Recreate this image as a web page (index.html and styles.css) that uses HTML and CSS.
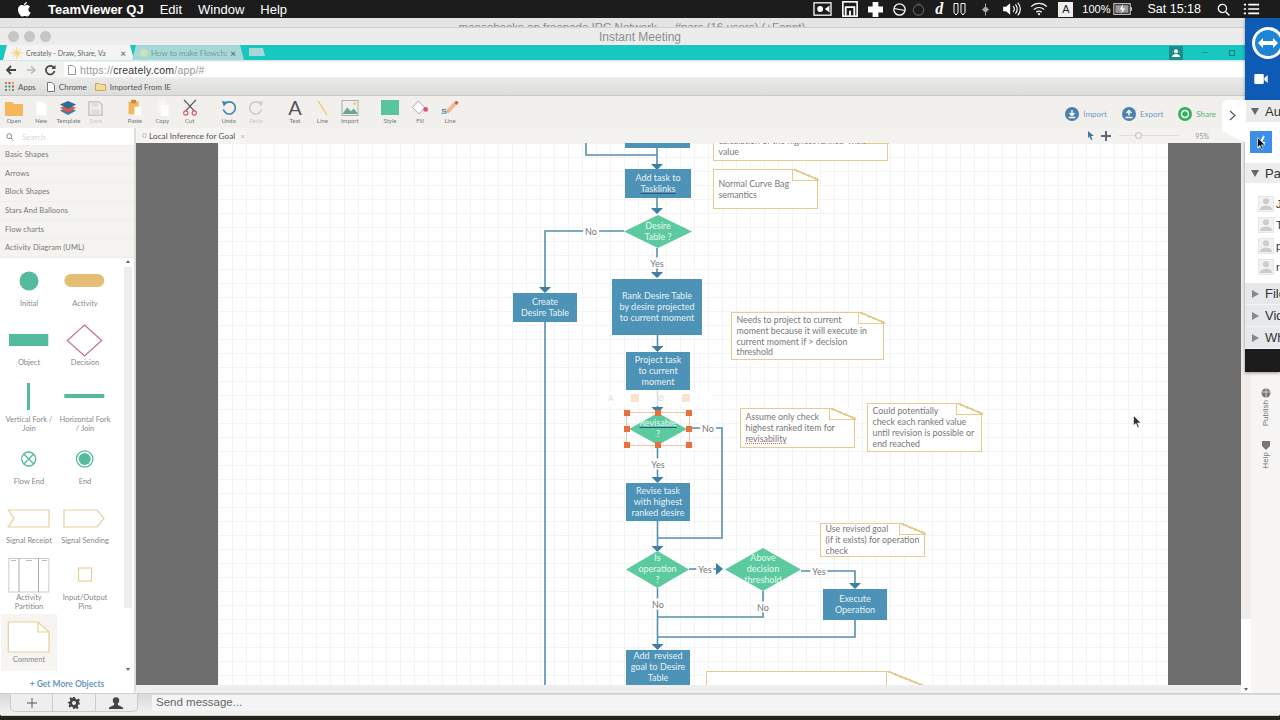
FILE: index.html
```html
<!DOCTYPE html>
<html lang="en">
<head>
  <meta charset="UTF-8" />
  <title>Instant Meeting</title>
  <link rel="stylesheet" href="styles.css">
</head>
<body>
  <div class="menubar">
    <svg class="apple" width="14" height="16" viewBox="0 0 14 16"><path fill="#fff" d="M10 1c0 1.500-1.300 3-3 3 0-1.600 1.400-3 3-3zM7 4.600c1 0 1.700-.6 3-.6 1 0 2.200.5 3 1.700-2.400 1.500-2 4.800.7 5.900-.6 1.600-1.900 3.900-3.300 3.900-1 0-1.400-.6-2.500-.6s-1.600.6-2.500.6C3.700 15.500 1 11.900 1 8.700 1 5.700 3 4.100 4.800 4.100c1 0 1.700.5 2.200.5z"/></svg>
    <b class="menu-app">TeamViewer QJ</b>
    <span class="menu-item">Edit</span>
    <span class="menu-item">Window</span>
    <span class="menu-item">Help</span>
    <div class="status">
      <svg width="19" height="14" viewBox="0 0 16 12"><rect x=".7" y=".7" width="14.600" height="10.600" fill="none" stroke="#fff" stroke-width="1.100"/><circle cx="6" cy="6" r="2.500" fill="#fff"/><path d="M10 6l4-3v6z" fill="#fff"/></svg>
      <svg width="16" height="16" viewBox="0 0 13 13"><rect x=".7" y=".7" width="11.600" height="11.600" fill="none" stroke="#fff" stroke-width="1.300"/><path d="M3 12V5h7v7M6.500 12V8" fill="none" stroke="#fff" stroke-width="1.500"/></svg>
      <svg width="15" height="15" viewBox="0 0 13 13"><path fill="#fff" d="M4 0h5v4h4v5H9v4H4V9H0V4h4z"/></svg>
      <svg width="13" height="13" viewBox="0 0 12 12"><circle cx="6" cy="6" r="5.200" fill="none" stroke="#fff" stroke-width="1.200"/><path d="M1 5l5 1 5 1" stroke="#fff" fill="none"/></svg>
      <svg class="status-timer" width="13" height="13" viewBox="0 0 12 12"><circle cx="6" cy="6.500" r="4.800" fill="none" stroke="#555" stroke-width="1.200"/><path d="M4 1h4" stroke="#555"/></svg>
      <i class="status-d">d</i>
      <svg width="13" height="14" viewBox="0 0 13 13"><path d="M1 1h4v9l-2 2.500L1 10zM8 1h4v9l-2 2.500L8 10z" fill="none" stroke="#fff"/></svg>
      <svg class="status-bt" width="9" height="13" viewBox="0 0 9 12"><path d="M4.500 0v12M1 6h7" stroke="#aaa"/><circle cx="4.500" cy="6" r="2.500" fill="#aaa"/></svg>
      <svg class="status-vol" width="19" height="14" viewBox="0 0 16 12"><path fill="#fff" d="M0 4h2.500L6 1v10L2.500 8H0z"/><path d="M8.500 3.500a3.500 3.500 0 010 5M10.500 2a6 6 0 010 8M12.500.5a8 8 0 010 11" stroke="#fff" fill="none"/></svg>
      <svg width="18" height="14" viewBox="0 0 15 12"><path d="M.8 4a9.500 9.500 0 0113.400 0M3 6.500a6.500 6.500 0 019 0M5.200 8.800a3.200 3.200 0 014.600 0" stroke="#fff" fill="none" stroke-width="1"/><path d="M6.300 10.200L7.500 11.600l1.200-1.400a1.500 1.500 0 00-2.400 0z" fill="#fff"/></svg>
      <span class="status-a">A</span>
      <span class="status-text">100%</span>
      <svg class="status-batt" width="22" height="12" viewBox="0 0 18 11"><rect x=".6" y=".6" width="15" height="9.800" fill="none" stroke="#ccc"/><rect x="2" y="2" width="12" height="7" fill="#999"/><path d="M16.500 4v3" stroke="#ccc" stroke-width="1.500"/><path d="M9 1L6 6h2.500L7 10l4-5H8.500z" fill="#fff"/></svg>
      <span class="status-text clock">Sat 15:18</span>
      <svg width="13" height="13" viewBox="0 0 12 12"><circle cx="5" cy="5" r="3.800" fill="none" stroke="#fff" stroke-width="1.200"/><path d="M8 8l3.500 3.500" stroke="#fff" stroke-width="1.300"/></svg>
      <svg class="status-list" width="17" height="12" viewBox="0 0 14 11"><path d="M0 1.500h2M4 1.500h10M0 5.500h2M4 5.500h10M0 9.500h2M4 9.500h10" stroke="#fff" stroke-width="1.500"/></svg>
    </div>
  </div>

  <div class="desktop">
    <div class="meeting-window">
      <div class="back-title">moosebooks on freenode IRC Network — #pars (16 users) (+Fopnt)</div>
      <div class="meeting-title">
        <div class="lights"><span class="light"></span><span class="light"></span><span class="light"></span></div>
        <span class="meeting-name">Instant Meeting</span>
      </div>

      <div class="tabstrip">
        <div class="tab tab-active">
          <svg width="12" height="12" viewBox="0 0 12 12"><circle cx="6" cy="6" r="2.500" fill="#f3d77f"/><path d="M6 0v12M0 6h12M2 2l8 8M10 2l-8 8" stroke="#f3d77f"/></svg>
          <span class="tab-title">Creately - Draw, Share, Va</span><span class="tab-x">×</span>
        </div>
        <div class="tab tab-back">
          <span class="tab-fav"></span>
          <span class="tab-title">How to make Flowcha</span><span class="tab-x">×</span>
        </div>
        <div class="tab-new"></div>
        <div class="tabstrip-right">
          <span class="profile-btn"><svg width="8" height="8" viewBox="0 0 8 8"><circle cx="4" cy="2.200" r="2" fill="#fff"/><path d="M0 8c0-2 2-3 4-3s4 1 4 3z" fill="#fff"/></svg></span>
          <span class="win-min"></span>
          <span class="win-max"></span>
        </div>
      </div>

      <div class="urlbar">
        <svg width="50" height="12" viewBox="0 0 50 12"><path d="M1 6h9M5 2L1 6l4 4" stroke="#444" stroke-width="1.800" fill="none"/><path d="M21 6h8M25 2.500L29 6l-4 3.500" stroke="#bbb" stroke-width="1.600" fill="none"/><path d="M48 4a4.300 4.300 0 10.500 3" stroke="#444" stroke-width="1.700" fill="none"/><path d="M49.500 1v4h-4z" fill="#444"/></svg>
        <div class="urlfield">
          <svg width="8" height="10" viewBox="0 0 8 10"><path d="M.5.500h4.500l2.500 2.500v6.500h-7z" fill="none" stroke="#999"/></svg>
          <span class="url-dim">https://</span><span class="url-host">creately.com</span><span class="url-dim">/app/#</span>
        </div>
      </div>

      <div class="bookmarks">
        <svg width="9" height="9" viewBox="0 0 9 9"><g fill="#c74"><rect width="2" height="2"/><rect x="3.500" width="2" height="2" fill="#d44"/><rect x="7" width="2" height="2" fill="#da3"/><rect y="3.500" width="2" height="2" fill="#4a6"/><rect x="3.500" y="3.500" width="2" height="2" fill="#48c"/><rect x="7" y="3.500" width="2" height="2" fill="#d44"/><rect y="7" width="2" height="2" fill="#48c"/><rect x="3.500" y="7" width="2" height="2" fill="#da3"/><rect x="7" y="7" width="2" height="2" fill="#4a6"/></g></svg>
        <span class="bm-label">Apps</span>
        <svg class="bm-icon" width="8" height="10" viewBox="0 0 8 10"><path d="M.5.500h4.500l2.500 2.500v6.500h-7z" fill="#fff" stroke="#777"/></svg>
        <span class="bm-label">Chrome</span>
        <svg class="bm-icon bm-folder" width="11" height="9" viewBox="0 0 11 9"><path d="M.5 1.500h4l1 1h5v6h-10z" fill="#f4dc9c" stroke="#c9a95a"/></svg>
        <span class="bm-label">Imported From IE</span>
      </div>

      <div class="toolbar">
        <div class="tool-group">
          <div class="tool"><svg width="20" height="14" viewBox="0 0 20 14"><path d="M1 0h7l2 2h9v12H1z" fill="#f4b75d"/></svg><span>Open</span></div>
          <div class="tool"><svg width="13" height="15" viewBox="0 0 14 18"><path d="M1 1h8l4 4v12H1z" fill="#fff"/></svg><span>New</span></div>
          <div class="tool"><svg width="18" height="16" viewBox="0 0 20 18"><path d="M10 8l9 4-9 5-9-5z" fill="#3d7fa5"/><path d="M10 5l9 4-9 5-9-5z" fill="#e5574a"/><path d="M10 1l9 4-9 5-9-5z" fill="#2c6f96"/></svg><span>Template</span></div>
          <div class="tool tool-off"><svg width="15" height="15" viewBox="0 0 16 16"><path d="M1 1h11l3 3v11H1z" fill="none" stroke="#bbb" stroke-width="1.300"/><rect x="4" y="1" width="7" height="5" fill="#ddd"/><rect x="3.500" y="9" width="9" height="6" fill="#ddd"/></svg><span>Save</span></div>
        </div>
        <div class="tool-group">
          <div class="tool"><svg width="15" height="18" viewBox="0 0 16 20"><rect x="1" y="3" width="12" height="15" fill="#f4b75d"/><rect x="4" y="1" width="6" height="4" fill="#c98a3a"/><rect x="8" y="9" width="8" height="10" fill="#fff"/></svg><span>Paste</span></div>
          <div class="tool"><svg width="13" height="18" viewBox="0 0 14 20"><rect x="1" y="1" width="9" height="13" fill="#f7f6f3"/><rect x="5" y="7" width="9" height="13" fill="#fff"/></svg><span>Copy</span></div>
          <div class="tool"><svg width="16" height="18" viewBox="0 0 18 20"><path d="M2 1l12 13M16 1L4 14" stroke="#555" stroke-width="1.500"/><circle cx="4" cy="16.500" r="2.500" fill="none" stroke="#e0506a" stroke-width="1.300"/><circle cx="14" cy="16.500" r="2.500" fill="none" stroke="#e0506a" stroke-width="1.300"/></svg><span>Cut</span></div>
        </div>
        <div class="tool-group">
          <div class="tool"><svg width="15" height="16" viewBox="0 0 16 17"><path d="M4 4a6.500 6.500 0 11-1.500 6" fill="none" stroke="#3f87ad" stroke-width="1.800"/><path d="M1 1l6 1-4 5z" fill="#3f87ad"/></svg><span>Undo</span></div>
          <div class="tool tool-off"><svg width="15" height="16" viewBox="0 0 16 17"><path d="M12 4a6.500 6.500 0 101.500 6" fill="none" stroke="#ccc" stroke-width="1.800"/><path d="M15 1l-6 1 4 5z" fill="#ccc"/></svg><span>Redo</span></div>
        </div>
        <div class="tool-group">
          <div class="tool"><span class="tool-a">A</span><span>Text</span></div>
          <div class="tool"><svg width="13" height="16" viewBox="0 0 14 18"><path d="M2 1l10 16" stroke="#f0c878" stroke-width="1.500"/></svg><span>Line</span></div>
          <div class="tool"><svg width="18" height="16" viewBox="0 0 18 17"><rect x=".5" y=".5" width="17" height="16" fill="#eee" stroke="#aaa"/><path d="M1 15l5-7 4 4 3-3 4 5v1H1z" fill="#68a890"/><circle cx="14" cy="4" r="1.500" fill="#f0d060"/></svg><span>Import</span></div>
        </div>
        <div class="tool-group tool-group-wide">
          <div class="tool"><span class="tool-swatch"></span><span>Style</span></div>
          <div class="tool"><svg width="18" height="16" viewBox="0 0 18 17"><path d="M7 1l7 7-6 7-7-7z" fill="#fff" stroke="#aaa"/><circle cx="15" cy="10" r="2.500" fill="#e0506a"/></svg><span>Fill</span></div>
          <div class="tool"><svg width="20" height="17" viewBox="0 0 20 18"><path d="M7 14L17 3" stroke="#f4b78f" stroke-width="4"/><path d="M16 3l2 2" stroke="#e0506a" stroke-width="3.500"/><path d="M6 11H2v2h4v2H1" stroke="#3f87ad" fill="none"/></svg><span>Line</span></div>
        </div>
        <div class="share-group">
          <span class="share-btn share-blue"><svg width="14" height="14" viewBox="0 0 14 14"><circle cx="7" cy="7" r="7" fill="#4a80b0"/><path d="M7 3v5M4.500 6L7 8.500 9.500 6M3.500 10.500h7" stroke="#fff" fill="none" stroke-width="1.400"/></svg>Import</span>
          <span class="share-btn share-blue"><svg width="14" height="14" viewBox="0 0 14 14"><circle cx="7" cy="7" r="7" fill="#4a80b0"/><path d="M7 8.500v-5M4.500 6L7 3.500 9.500 6M3.500 10.500h7" stroke="#fff" fill="none" stroke-width="1.400"/></svg>Export</span>
          <span class="share-btn share-green"><svg width="14" height="14" viewBox="0 0 14 14"><circle cx="7" cy="7" r="7" fill="#33b05a"/><circle cx="7" cy="7" r="3.500" fill="none" stroke="#fff" stroke-width="1.500"/></svg>Share</span>
        </div>
      </div>

      <div class="workarea">
        <aside class="sidebar">
          <div class="search"><svg width="8" height="8" viewBox="0 0 8 8"><circle cx="3.200" cy="3.200" r="2.400" fill="none" stroke="#888"/><path d="M5 5l2.500 2.500" stroke="#888"/></svg><span>Search</span></div>
          <div class="cat">Basic Shapes</div>
          <div class="cat">Arrows</div>
          <div class="cat">Block Shapes</div>
          <div class="cat">Stars And Balloons</div>
          <div class="cat">Flow charts</div>
          <div class="cat">Activity Diagram (UML)</div>
          <div class="shapes-wrap">
            <div class="shapes">
              <div class="shape"><svg width="56" height="40" viewBox="0 0 56 40"><circle cx="28" cy="22" r="9.500" fill="#55bb9f"/></svg><span>Initial</span></div>
              <div class="shape"><svg width="56" height="40" viewBox="0 0 56 40"><rect x="7.300" y="15" width="40" height="13" rx="6.500" fill="#e6bd74"/></svg><span>Activity</span></div>
              <div class="shape"><svg width="56" height="40" viewBox="0 0 56 40"><rect x="8" y="16" width="39.300" height="12" fill="#55bb9f"/></svg><span>Object</span></div>
              <div class="shape"><svg width="56" height="40" viewBox="0 0 56 40"><path d="M27.500 7l17.200 15.500L27.500 38 10.300 22.500z" fill="#fff" stroke="#cf6f84" stroke-width="1.200"/></svg><span>Decision</span></div>
              <div class="shape"><svg width="56" height="38" viewBox="0 0 56 38"><rect x="26" y="6" width="3" height="27" fill="#55bb9f"/></svg><span>Vertical Fork / Join</span></div>
              <div class="shape"><svg width="56" height="38" viewBox="0 0 56 38"><rect x="7.300" y="17" width="40" height="4" fill="#55bb9f"/></svg><span>Horizontal Fork / Join</span></div>
              <div class="shape"><svg width="56" height="41" viewBox="0 0 56 41"><circle cx="27.700" cy="23" r="7" fill="#fff" stroke="#55bb9f" stroke-width="1.300"/><path d="M22.800 18l10 10M32.800 18l-10 10" stroke="#55bb9f" stroke-width="1.300"/></svg><span>Flow End</span></div>
              <div class="shape"><svg width="56" height="41" viewBox="0 0 56 41"><circle cx="27.700" cy="23" r="8.200" fill="#fff" stroke="#55bb9f" stroke-width="1.300"/><circle cx="27.700" cy="23" r="6" fill="#55bb9f"/></svg><span>End</span></div>
              <div class="shape"><svg width="56" height="41" viewBox="0 0 56 41"><path d="M7.300 15H48v17H7.300l5.700-8.500z" fill="#fff" stroke="#e7cf9b" stroke-width="1.200"/></svg><span>Signal Receipt</span></div>
              <div class="shape"><svg width="56" height="41" viewBox="0 0 56 41"><path d="M7 15h33l7 8.500-7 8.500H7z" fill="#fff" stroke="#e7cf9b" stroke-width="1.200"/></svg><span>Signal Sending</span></div>
              <div class="shape"><svg width="56" height="39" viewBox="0 0 56 39"><rect x="7.800" y="4.500" width="40" height="33.500" fill="#fff" stroke="#ccc"/><path d="M18 4.500V38M37.500 4.500V38" stroke="#aaa" fill="none"/><path d="M10 6.500h5M25 6.500h6M41 6.500h5" stroke="#bbb"/></svg><span>Activity<br>Partition</span></div>
              <div class="shape"><svg width="56" height="39" viewBox="0 0 56 39"><rect x="21.500" y="14" width="13" height="13" fill="#fff" stroke="#e7cf9b" stroke-width="1.200"/></svg><span>Input/Output Pins</span></div>
              <div class="shape shape-sel"><svg width="56" height="41" viewBox="0 0 56 41"><path d="M7.300 8H37l11 10v20H7.300z" fill="#fff" stroke="#e7cf9b" stroke-width="1.200"/><path d="M37 8v10h11" fill="none" stroke="#e7cf9b" stroke-width="1.200"/></svg><span>Comment</span></div>
            </div>
            <div class="scroll-track"><span class="scroll-up"></span><span class="scroll-thumb"></span><span class="scroll-down"></span></div>
          </div>
          <div class="more-objects">+ Get More Objects</div>
        </aside>

        <main class="editor">
          <div class="editor-top">
            <div class="doc-tab"><span class="doc-ring"></span>Local Inference for Goal<span class="doc-x">×</span></div>
            <div class="zoom-tools">
              <svg width="8" height="9" viewBox="0 0 8 9"><path d="M1 0l6 5H4l1.500 3.500L4 9 2.500 5.500 1 7z" fill="#3f7aa0"/></svg>
              <svg width="10" height="10" viewBox="0 0 10 10"><path d="M5 0v10M0 5h10" stroke="#667" stroke-width="2"/></svg>
              <span class="zoom-slider"><i></i></span>
              <span class="zoom-pct">95%</span>
            </div>
          </div>
          <div class="stage">
            <div class="page">
              <svg class="wires" width="950" height="542" viewBox="0 0 950 542">
                <g fill="none" stroke="#558fad" stroke-width="1.600">
                  <path d="M368-2V12H439"/>
                  <path d="M439 5V21"/>
                  <path d="M439 55V66"/>
                  <path d="M439 105V129"/>
                  <path d="M406 88H327V144"/>
                  <path d="M327 179V542"/>
                  <path d="M439.500 192V203"/>
                  <path d="M439.500 247V264"/>
                  <path d="M439.500 302V335"/>
                  <path d="M439.500 378V403"/>
                  <path d="M469 285H504V395H439.500"/>
                  <path d="M471 426H498"/>
                  <path d="M583 428H637V440"/>
                  <path d="M439.500 445V501"/>
                  <path d="M545 448V474H439.500"/>
                  <path d="M637 477V494H439.500"/>
                </g>
                <g fill="#3f7fa3">
                  <path d="M433 21h12l-6 6zM433 65h12l-6 6zM433 129h12l-6 6zM321 144h12l-6 6zM433.500 203h12l-6 6zM433.500 264h12l-6 6zM433.500 334h12l-6 6zM433.500 403h12l-6 6zM631 440h12l-6 6zM433.500 501h12l-6 6zM498 420v12l7-6z"/>
                </g>
              </svg>

              <div class="box" style="left:407px;top:-10px;width:65px;height:15px"></div>
              <div class="box" style="left:407px;top:26px;width:66px;height:29px"><span>Add task to<br><u>Tasklinks</u></span></div>
              <div class="box" style="left:295px;top:150px;width:64px;height:29px"><span>Create<br>Desire Table</span></div>
              <div class="box" style="left:394px;top:136px;width:90px;height:56px"><span>Rank Desire Table<br>by desire projected<br>to current moment</span></div>
              <div class="box" style="left:408px;top:209px;width:64px;height:38px"><span>Project task<br>to current<br>moment</span></div>
              <div class="box" style="left:408px;top:340px;width:64px;height:38px"><span>Revise task<br>with highest<br>ranked desire</span></div>
              <div class="box" style="left:605px;top:446px;width:64px;height:31px"><span>Execute<br>Operation</span></div>
              <div class="box" style="left:408px;top:507px;width:64px;height:35px"><span>Add  revised<br>goal to Desire<br>Table</span></div>

              <div class="diamond" style="left:406px;top:72px;width:68px;height:33px"><span>Desire<br>Table ?</span></div>
              <div class="diamond" style="left:411px;top:270px;width:58px;height:32px"><span><u>Revisable</u><br>?</span></div>
              <div class="diamond" style="left:408px;top:408px;width:63px;height:37px"><span>Is<br>operation<br>?</span></div>
              <div class="diamond" style="left:507px;top:405px;width:76px;height:43px"><span>Above<br>decision<br>threshold</span></div>

              <span class="wire-label" style="left:373px;top:88px">No</span>
              <span class="wire-label" style="left:439px;top:120px">Yes</span>
              <span class="wire-label" style="left:490px;top:285px">No</span>
              <span class="wire-label" style="left:440px;top:321px">Yes</span>
              <span class="wire-label" style="left:487px;top:426px">Yes</span>
              <span class="wire-label" style="left:440px;top:461px">No</span>
              <span class="wire-label" style="left:545px;top:464px">No</span>
              <span class="wire-label" style="left:601px;top:428px">Yes</span>

              <div class="note" style="left:495px;top:-11px;width:175px;height:28.500px"><i class="fold"></i><span>calculation of the highest ranked 'wish'<br>value</span></div>
              <div class="note" style="left:495px;top:26px;width:105px;height:40px"><i class="fold"></i><span>Normal Curve Bag<br>semantics</span></div>
              <div class="note" style="left:513px;top:169px;width:153px;height:48px"><i class="fold"></i><span>Needs to project to current<br>moment because it will execute in<br>current moment if &gt; decision<br>threshold</span></div>
              <div class="note" style="left:522px;top:265px;width:115px;height:40px"><i class="fold"></i><span>Assume only check<br>highest ranked item for<br><u class="spell">revisability</u></span></div>
              <div class="note" style="left:649px;top:260px;width:115px;height:49px"><i class="fold"></i><span>Could potentially<br>check each ranked value<br>until revision is possible or<br>end reached</span></div>
              <div class="note" style="left:602px;top:380px;width:105px;height:34px"><i class="fold"></i><span>Use revised goal<br>(if it exists) for operation<br>check</span></div>
              <div class="note" style="left:488px;top:528px;width:222px;height:40px"><i class="fold fold-big"></i></div>

              <div class="selection">
                <i class="handle h1"></i><i class="handle h2"></i><i class="handle h3"></i>
                <i class="handle h4"></i><i class="handle h5"></i>
                <i class="handle h6"></i><i class="handle h7"></i><i class="handle h8"></i>
              </div>
              <div class="quick-bar"><span>A</span><span class="qb-sq"></span><span>⚙</span><span class="qb-sq"></span></div>
            </div>
            <svg class="cursor" width="9" height="13" viewBox="0 0 9 13"><path d="M.5.500v10l2.500-2 1.700 4 1.500-.6-1.700-4H8z" fill="#333" stroke="#fff" stroke-width=".6"/></svg>
          </div>
          <div class="editor-foot"></div>
        </main>
        <div class="side-tools">
          <div class="side-scroll"><span class="side-thumb"></span><span class="scroll-down"></span></div>
          <div class="side-list">
            <div class="side-tool"><svg width="10" height="10" viewBox="0 0 10 10"><circle cx="5" cy="5" r="4.500" fill="#777"/><path d="M1 4h8M5 .5v9" stroke="#eee" stroke-width=".7"/></svg><span>Publish</span></div>
            <div class="side-tool"><svg width="10" height="10" viewBox="0 0 10 10"><path d="M1 1h8v5l-4 4-4-4z" fill="#777"/></svg><span>Help</span></div>
          </div>
        </div>
      </div>

      <div class="chatbar">
        <div class="chat-btns">
          <span class="chat-btn"><svg width="10" height="10" viewBox="0 0 10 10"><path d="M5 0v10M0 5h10" stroke="#555"/></svg></span>
          <span class="chat-btn"><svg width="12" height="12" viewBox="0 0 12 12"><path fill="#444" d="M5 0h2l.4 1.800 1.500.6L10.500 1.500 11.900 3l-1 1.500.6 1.500L12 6.700v.6l-1.800.4-.6 1.500 1 1.500-1.400 1.400-1.500-1-1.500.6L6.800 12H5.200l-.4-1.800-1.500-.6-1.500 1L.4 9.200l1-1.500-.6-1.500L0 5.800V5l1.800-.4.6-1.500-1-1.500L2.800.2l1.500 1 .4-.2zM6 4a2 2 0 100 4 2 2 0 000-4z"/></svg></span>
          <span class="chat-btn"><svg width="14" height="12" viewBox="0 0 14 12"><circle cx="7" cy="3.500" r="3.200" fill="#444"/><path d="M5.500 6h3l.5 2 5 2.500V12H0v-1.500L5 8z" fill="#444"/></svg></span>
        </div>
        <span class="chat-input">Send message...</span>
      </div>
    </div>

    <aside class="tv-panel">
      <div class="tv-head">
        <svg width="34" height="34" viewBox="0 0 34 34"><circle cx="17" cy="17" r="16" fill="#fff"/><circle cx="17" cy="17" r="13" fill="#1d84d6"/><path d="M7 17l5-5v3h10v-3l5 5-5 5v-3H12v3z" fill="#fff"/></svg>
        <svg class="tv-cam" width="14" height="10" viewBox="0 0 12 9"><rect width="8.500" height="9" rx="1" fill="#fff"/><path d="M9 3.500L12 1v7L9 5.500z" fill="#fff"/></svg>
      </div>
      <div class="tv-row tv-open"><span class="tri-down"></span>Au</div>
      <div class="tv-pointer"><span class="pointer-btn"><svg width="12" height="14" viewBox="0 0 12 14"><path d="M9 1L3 13M2 6l8 2" stroke="#fff" stroke-width="1.800" fill="none"/></svg></span>
        <svg class="tv-arrow" width="9" height="13" viewBox="0 0 9 13"><path d="M.5.500v10l2.500-2 1.700 4 1.500-.6-1.700-4H8z" fill="#111" stroke="#fff" stroke-width=".6"/></svg>
      </div>
      <div class="tv-row tv-open tv-pa"><span class="tri-down"></span>Pa</div>
      <div class="tv-people">
        <div class="person"><span class="avatar"><svg width="16" height="15" viewBox="0 0 16 15"><circle cx="8" cy="5" r="3.500" fill="#ccc"/><path d="M1 15c0-4 4-5 7-5s7 1 7 5z" fill="#ccc"/></svg></span>J</div>
        <div class="person"><span class="avatar"><svg width="16" height="15" viewBox="0 0 16 15"><circle cx="8" cy="5" r="3.500" fill="#ccc"/><path d="M1 15c0-4 4-5 7-5s7 1 7 5z" fill="#ccc"/></svg></span>T</div>
        <div class="person"><span class="avatar"><svg width="16" height="15" viewBox="0 0 16 15"><circle cx="8" cy="5" r="3.500" fill="#ccc"/><path d="M1 15c0-4 4-5 7-5s7 1 7 5z" fill="#ccc"/></svg></span>p</div>
        <div class="person"><span class="avatar"><svg width="16" height="15" viewBox="0 0 16 15"><circle cx="8" cy="5" r="3.500" fill="#ccc"/><path d="M1 15c0-4 4-5 7-5s7 1 7 5z" fill="#ccc"/></svg></span>r</div>
      </div>
      <div class="tv-row tv-closed"><span class="tri-right"></span>File</div>
      <div class="tv-row tv-closed"><span class="tri-right"></span>Vid</div>
      <div class="tv-row tv-closed"><span class="tri-right"></span>Wh</div>
      <div class="tv-black"></div>
    </aside>

    <div class="collapse-tab"><svg width="7" height="11" viewBox="0 0 7 11"><path d="M1 1l5 4.500L1 10" fill="none" stroke="#555" stroke-width="1.200"/></svg></div>
  </div>
</body>
</html>
```

FILE: styles.css
```css
* { box-sizing: border-box; }

html, body {
  margin: 0;
  height: 100%;
}

body {
  width: 1280px;
  height: 720px;
  overflow: hidden;
  display: flex;
  flex-direction: column;
  font-family: "Lato", "Liberation Sans", sans-serif;
  background: #26231f;
}

/* mac menu bar */
.menubar {
  height: 18px;
  flex: none;
  display: flex;
  align-items: center;
  background: #1c1c1c;
  color: #fff;
  font-family: "Liberation Sans", sans-serif;
  font-size: 13px;
}
.apple { margin-left: 17px; margin-right: 17px; }
.menu-app { margin-right: 16px; }
.menu-item { margin-right: 16px; }

.status {
  margin-left: auto;
  display: flex;
  align-items: center;
  gap: 10px;
  padding-right: 20px;
}
.status-d { font: italic bold 16px "Liberation Serif", serif; }
.status-timer { margin-left: -4px; }
.status-bt { margin-left: 5px; margin-right: 3px; }
.status-vol { margin-right: -2px; }
.status-a {
  width: 15px;
  height: 15px;
  background: #eee;
  color: #222;
  font-size: 11px;
  text-align: center;
  line-height: 15px;
  margin-right: -1px;
}
.status-text { font-size: 11px; }
.status-batt { margin-left: -8px; }
.clock { font-size: 12.500px; margin-left: 3px; margin-right: 6px; }
.status-list { margin-left: 3px; }

.desktop {
  position: relative;
  flex: 1;
  min-height: 0;
}

.meeting-window {
  height: 698px;
  display: flex;
  flex-direction: column;
  background: #efeeeb;
  border-radius: 0 0 3px 3px;
  overflow: hidden;
}

.back-title {
  height: 9px;
  flex: none;
  overflow: hidden;
  text-align: center;
  padding-right: 16px;
  font-family: "Liberation Sans", sans-serif;
  font-size: 11.500px;
  line-height: 19px;
  color: #8a8a8a;
  background: #e4e4e4;
}

.meeting-title {
  height: 18px;
  flex: none;
  display: grid;
  grid-template-columns: 1fr auto 1fr;
  align-items: center;
  padding: 0 8px;
  background: #ececec;
  border-top: 1px solid #cfcfcf;
}
.lights { display: flex; gap: 5px; }
.light {
  width: 11px;
  height: 11px;
  border-radius: 50%;
  background: #c6c6c6;
}
.meeting-name {
  font-family: "Liberation Sans", sans-serif;
  font-size: 12px;
  color: #8c8c8c;
}

/* chrome tabs */
.tabstrip {
  height: 15px;
  flex: none;
  display: flex;
  align-items: flex-end;
  padding-left: 3px;
  background: #17c7c0;
}
.tab {
  height: 15px;
  display: flex;
  align-items: center;
  gap: 3px;
  padding: 0 8px;
  font-size: 8px;
  clip-path: polygon(4px 0, calc(100% - 4px) 0, 100% 100%, 0 100%);
}
.tab-active { width: 131px; background: #f4f4f4; color: #666; font-size: 7px; }
.tab-back { width: 112px; margin-left: -2px; background: #a6d8d8; color: #7a9c9c; }
.tab-fav {
  width: 8px;
  height: 8px;
  border-radius: 50%;
  background: #c7e3b8;
}
.tab-title { flex: 1; white-space: nowrap; overflow: hidden; }
.tab-x { color: #555; font-size: 10px; }
.tab-new {
  width: 18px;
  height: 8px;
  margin: 0 0 4px 3px;
  background: #a6d8d8;
  clip-path: polygon(2px 0, calc(100% - 2px) 0, 100% 100%, 2px 100%);
}
.tabstrip-right {
  margin-left: auto;
  display: flex;
  align-items: center;
  height: 100%;
  padding-right: 45px;
}
.profile-btn {
  width: 14px;
  height: 14px;
  background: #1a8d8a;
  display: flex;
  align-items: center;
  justify-content: center;
  margin-right: 19px;
}
.win-min {
  width: 6px;
  height: 1px;
  background: #149794;
  margin-right: 21px;
}
.win-max {
  width: 6px;
  height: 6px;
  border: 1px solid #0f7f7c;
}

.urlbar {
  height: 18px;
  flex: none;
  display: flex;
  align-items: center;
  gap: 8px;
  padding-left: 6px;
  background: #f1f1ef;
  border-top: 1px solid #cfe9e7;
}
.urlfield {
  flex: 1;
  height: 15px;
  display: flex;
  align-items: center;
  padding-left: 4px;
  background: #fff;
  font-family: "Liberation Sans", sans-serif;
  font-size: 10.500px;
  letter-spacing: .2px;
}
.urlfield svg { margin-right: 4px; }
.url-dim { color: #999; }
.url-host { color: #333; }

.bookmarks {
  height: 18px;
  flex: none;
  display: flex;
  align-items: center;
  padding-left: 5px;
  background: linear-gradient(to bottom, #e9e9e7, #dcdcda);
  border-bottom: 1px solid #c8c8c6;
  font-size: 8px;
  color: #555;
}
.bm-label { margin-left: 4px; }
.bm-icon { margin-left: 11px; }
.bm-folder { margin-left: 8px; }

/* creately toolbar */
.toolbar {
  height: 32px;
  flex: none;
  display: flex;
  align-items: flex-start;
  padding: 3px 0 0 0;
  background: #f1f0ed;
}
.tool-group {
  display: flex;
  margin-right: 11.600px;
}
.tool {
  width: 27.400px;
  height: 25px;
  display: flex;
  flex-direction: column;
  align-items: center;
  justify-content: flex-end;
  font-size: 6px;
  color: #777;
}
.tool-group-wide .tool { width: 30px; }
.tool span:last-child { margin-top: 1px; }
.tool-off { color: #ccc; }
.tool-a { font-size: 20px; line-height: 17px; color: #555; margin-top: 0 !important; }
.tool-swatch {
  width: 18px;
  height: 15px;
  background: #58c69d;
  margin-bottom: 1px;
  margin-top: 0 !important;
}
.share-group {
  margin-left: auto;
  display: flex;
  gap: 15px;
  align-items: center;
  padding-right: 64px;
  height: 29px;
}
.share-btn {
  display: flex;
  align-items: center;
  gap: 4px;
  font-size: 8px;
}
.share-blue { color: #6f9cc2; }
.share-green { color: #55b57a; }

.workarea {
  flex: 1;
  min-height: 0;
  display: flex;
  background: #f3f2ef;
}

/* shape library */
.sidebar {
  width: 136px;
  flex: none;
  display: flex;
  flex-direction: column;
  background: #f4f3f0;
  border-right: 2px solid #ddd;
  border-radius: 0 0 3px 3px;
  overflow: hidden;
}
.search {
  height: 18px;
  flex: none;
  display: flex;
  align-items: center;
  gap: 8px;
  padding-left: 6px;
  font-size: 8px;
  color: #d8d8d8;
  background: #fff;
  border-bottom: 1px solid #efefef;
}
.cat {
  height: 18.600px;
  flex: none;
  display: flex;
  align-items: center;
  padding-left: 5px;
  font-size: 7.500px;
  letter-spacing: .1px;
  color: #777;
  border-bottom: 1px solid #eeedea;
}
.shapes-wrap {
  flex: 1;
  min-height: 0;
  display: flex;
  background: #fff;
}
.shapes {
  flex: 1;
  display: grid;
  grid-template-columns: 56px 56px;
  grid-template-rows: 59px 59px 59px 59px 59px 60px 57px;
  align-content: start;
  padding: 1.400px 0 0 1px;
}
.shape {
  display: flex;
  flex-direction: column;
  align-items: center;
  font-size: 7.500px;
  line-height: 9px;
  text-align: center;
  color: #888;
}
.shape svg { flex: none; }
.shape-sel { background: #f6f5f2; }

.scroll-track {
  width: 8px;
  flex: none;
  margin-right: 2px;
  display: flex;
  flex-direction: column;
  align-items: center;
  background: #fff;
}
.scroll-thumb { width: 100%; height: 341px; margin-top: 4px; background: #efecea; }
.scroll-up, .scroll-down {
  width: 0;
  height: 0;
  border-left: 2.500px solid transparent;
  border-right: 2.500px solid transparent;
}
.scroll-up { margin-top: 2px; border-bottom: 3px solid #666; }
.scroll-down { margin-top: auto; margin-bottom: 2px; border-top: 3px solid #666; }

.more-objects {
  height: 20px;
  flex: none;
  text-align: center;
  line-height: 22px;
  font-size: 8.500px;
  font-weight: bold;
  color: #6a97c0;
  background: #fff;
}

/* editor */
.editor {
  flex: 1;
  min-width: 0;
  display: flex;
  flex-direction: column;
  background: #6e6e6e;
}
.editor-top {
  height: 15px;
  flex: none;
  display: flex;
  align-items: center;
  background: #f3f2ef;
}
.doc-tab {
  width: 110px;
  height: 15px;
  display: flex;
  align-items: center;
  gap: 2px;
  padding-left: 6px;
  font-size: 8.300px;
  color: #555;
  background: #f6f5f2;
}
.doc-ring {
  width: 5px;
  height: 5px;
  border-radius: 50%;
  border: 1px solid #bbb;
}
.doc-x { color: #bbb; margin-left: 3px; }
.zoom-tools {
  margin-left: auto;
  display: flex;
  align-items: center;
  gap: 6px;
  padding-right: 32px;
}
.zoom-slider {
  position: relative;
  width: 60px;
  height: 1px;
  background: #ddd;
  margin: 0 10px 0 2px;
}
.zoom-slider i {
  position: absolute;
  left: 16px;
  top: -3px;
  width: 7px;
  height: 7px;
  border-radius: 50%;
  border: 1px solid #bbb;
  background: #f3f2ef;
}
.zoom-pct { font-size: 7px; color: #999; }

.stage {
  position: relative;
  flex: 1;
  min-height: 0;
  overflow: hidden;
}
.editor-foot { height: 8px; flex: none; background: #efefef; }

/* the diagram is a free canvas, boxes go at their own spots */
.page {
  position: absolute;
  left: 82px;
  top: 0;
  width: 950px;
  height: 100%;
  overflow: hidden;
  background-color: #fff;
  background-image:
    linear-gradient(#f3f5f5 1px, transparent 1px),
    linear-gradient(90deg, #f3f5f5 1px, transparent 1px);
  background-size: 14px 14px;
}
.wires { position: absolute; left: 0; top: 0; }
.box, .diamond, .note, .wire-label { position: absolute; }
.box {
  display: flex;
  align-items: center;
  justify-content: center;
  padding-bottom: 2px;
  text-align: center;
  background: #4d93b8;
  color: #e8f2f5;
  font-size: 9px;
  line-height: 11px;
  white-space: pre-wrap;
}
.box u, .diamond u { text-decoration-color: #2c5a7a; }
.diamond {
  display: flex;
  align-items: center;
  justify-content: center;
  text-align: center;
  color: #e8f7f1;
  font-size: 9px;
  line-height: 10.800px;
  white-space: nowrap;
}
.diamond::before {
  content: "";
  position: absolute;
  inset: 0;
  background: #5bcb9f;
  clip-path: polygon(50% 0, 100% 50%, 50% 100%, 0 50%);
}
.diamond span { position: relative; }
.wire-label {
  transform: translate(-50%, -50%);
  background: #fff;
  padding: 0 2px;
  color: #777;
  font-size: 9px;
  line-height: 11px;
}
.note {
  display: flex;
  align-items: center;
  border: 1.500px solid #e6cb8f;
  background: #fff;
  padding: 1px 4.500px 0;
  color: #777;
  font-size: 8.800px;
  line-height: 10.800px;
  white-space: nowrap;
}
.note span { position: relative; }
.fold {
  position: absolute;
  right: -1.500px;
  top: -1.500px;
  width: 27px;
  height: 12px;
  background: linear-gradient(to top right, #fff calc(50% - 1px), #e6cb8f calc(50% - 1px) calc(50% + 1px), #fff calc(50% + 1px));
  border-bottom: 1.500px solid #e6cb8f;
  border-left: 1.500px solid #e6cb8f;
}
.fold-big { width: 43px; height: 18px; }
.spell { text-decoration-color: #d66; text-decoration-style: dotted; }

.selection {
  position: absolute;
  left: 408px;
  top: 269px;
  width: 64px;
  height: 34px;
  border: 1px solid #f2c8a8;
}
.handle {
  position: absolute;
  width: 6px;
  height: 6px;
  background: #e8703f;
}
.h1 { left: -3px; top: -3px; }
.h2 { left: 28px; top: -3px; }
.h3 { right: -3px; top: -3px; }
.h4 { left: -3px; top: 13px; }
.h5 { right: -3px; top: 13px; }
.h6 { left: -3px; bottom: -3px; }
.h7 { left: 28px; bottom: -3px; }
.h8 { right: -3px; bottom: -3px; }

.quick-bar {
  position: absolute;
  left: 382px;
  top: 247px;
  width: 112px;
  height: 16px;
  display: flex;
  align-items: center;
  gap: 18px;
  padding-left: 8px;
  font-size: 8px;
  color: #ddd;
  background: rgba(255, 255, 255, .75);
}
.qb-sq { width: 8px; height: 8px; background: #f8e3cf; }

.cursor { position: absolute; left: 997px; top: 272px; }

.side-tools {
  width: 39px;
  flex: none;
  display: flex;
  background: #f6f5f3;
}
.side-scroll {
  width: 10px;
  flex: none;
  display: flex;
  flex-direction: column;
  align-items: center;
  background: #fff;
}
.side-thumb { width: 100%; height: 491px; background: #efecea; }
.side-list {
  flex: 1;
  display: flex;
  flex-direction: column;
  align-items: center;
  gap: 14px;
  padding-top: 260px;
}
.side-tool {
  display: flex;
  flex-direction: column;
  align-items: center;
  gap: 2px;
}
.side-tool span {
  writing-mode: vertical-rl;
  transform: rotate(180deg);
  font-family: "Liberation Sans", sans-serif;
  font-size: 8px;
  color: #777;
}

.chatbar {
  height: 23px;
  flex: none;
  display: flex;
  align-items: flex-start;
  padding-left: 10px;
  background: linear-gradient(to bottom, #d9d9d9, #ececec 70%, #f2f2f2);
  border-top: 1px solid #cfcfcf;
  box-shadow: inset 0 -1px 0 #d0d0d0;
}
.chat-btns {
  width: 128px;
  height: 18px;
  display: flex;
  border-radius: 0 0 5px 5px;
  background: #eee;
  border: 1px solid #ccc;
  border-top: 0;
}
.chat-btn {
  flex: 1;
  display: flex;
  align-items: center;
  justify-content: center;
  border-right: 1px solid #ccc;
}
.chat-btn:last-child { border-right: 0; }
.chat-input {
  flex: 1;
  height: 16px;
  margin: 1px 0 0 14px;
  padding-left: 4px;
  line-height: 15px;
  background: #f4f4f4;
  font-family: "Liberation Sans", sans-serif;
  font-size: 11.500px;
  color: #666;
}

/* teamviewer panel floats over the window */
.tv-panel {
  position: absolute;
  right: 0;
  top: 0;
  width: 35px;
  height: 354px;
  overflow: hidden;
  display: flex;
  flex-direction: column;
  background: #fff;
  font-family: "Liberation Sans", sans-serif;
  font-size: 13px;
  color: #333;
  white-space: nowrap;
  box-shadow: 0 1px 3px rgba(0, 0, 0, .4);
}
.tv-head {
  height: 82px;
  flex: none;
  display: flex;
  flex-direction: column;
  align-items: flex-start;
  padding: 8px 0 0 6px;
  background: #0e5bb5;
}
.tv-cam { margin: 14px 0 0 3px; }
.tv-row {
  height: 22px;
  flex: none;
  display: flex;
  align-items: center;
  gap: 6px;
  padding-left: 6px;
}
.tv-open { background: #ececec; }
.tv-pa { height: 20px; }
.tv-closed { background: #e6e9ec; border-bottom: 1px solid #f4f4f4; }
.tri-down { border-left: 4px solid transparent; border-right: 4px solid transparent; border-top: 7px solid #666; }
.tri-right { margin-left: 1px; border-top: 4px solid transparent; border-bottom: 4px solid transparent; border-left: 7px solid #888; }
.tv-pointer {
  position: relative;
  height: 41px;
  flex: none;
  padding: 9px 0 0 5px;
}
.pointer-btn {
  width: 22px;
  height: 22px;
  display: flex;
  align-items: center;
  justify-content: center;
  background: #3b8fe8;
}
.tv-arrow { position: absolute; left: 12px; top: 15px; }
.tv-people {
  height: 100px;
  flex: none;
  padding-top: 10px;
}
.person {
  height: 21px;
  display: flex;
  align-items: center;
  gap: 2px;
  padding-left: 13px;
  font-size: 11px;
}
.avatar {
  width: 16px;
  height: 16px;
  display: flex;
  align-items: flex-end;
  background: #f2f2f2;
  border: 1px solid #e6e6e6;
}
.tv-black { height: 23px; flex: none; background: #1b1b1b; }

.collapse-tab {
  position: absolute;
  left: 1222px;
  top: 82px;
  width: 24px;
  height: 43px;
  display: flex;
  justify-content: center;
  padding: 10px 4px 0 0;
  background: #fff;
  clip-path: polygon(4px 0, 100% 0, 100% 100%, 0 72%, 0 4px);
}
```
